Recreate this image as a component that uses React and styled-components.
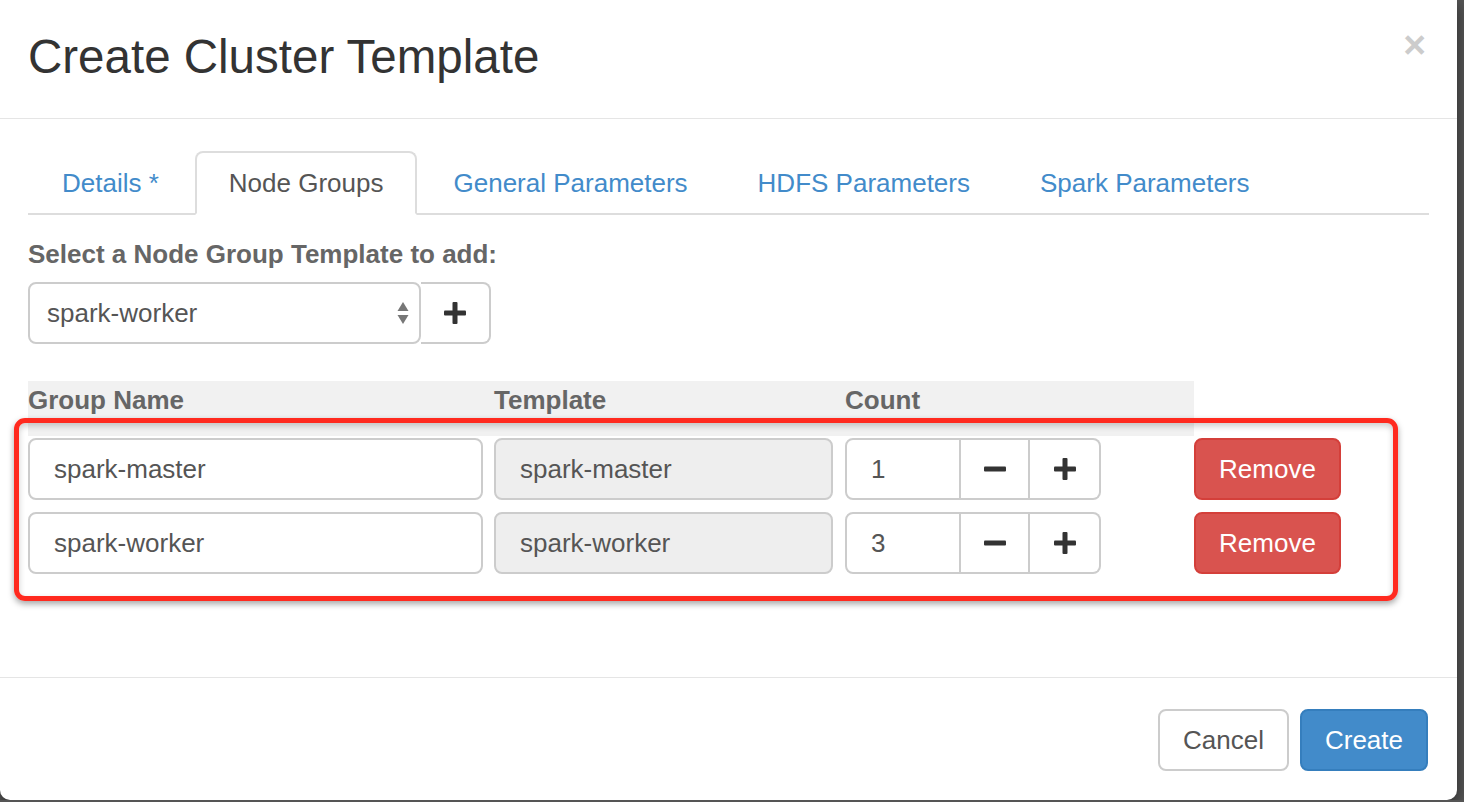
import styled, { createGlobalStyle } from 'styled-components'

const GlobalStyle = createGlobalStyle`
  html, body {
    margin: 0;
    padding: 0;
    background: #555555;
    font-family: 'Liberation Sans', Arial, Helvetica, sans-serif;
  }
  * {
    box-sizing: border-box;
  }
`

const blue = '#428bca'
const border = '#cccccc'

const Modal = styled.div`
  width: 1457px;
  height: 800px;
  background: #ffffff;
  border-radius: 0 0 10px 10px;
  box-shadow: 0 5px 15px rgba(0, 0, 0, 0.5);
  display: flex;
  flex-direction: column;
`

const Header = styled.header`
  height: 119px;
  flex-shrink: 0;
  display: flex;
  justify-content: space-between;
  align-items: flex-start;
  padding: 0 31px 0 28px;
  border-bottom: 1px solid #e5e5e5;
`

const Title = styled.h4`
  margin: 31px 0 0;
  font-size: 47.5px;
  line-height: 52px;
  font-weight: 400;
  color: #333333;
`

const Close = styled.button`
  margin-top: 25px;
  padding: 0;
  border: 0;
  background: transparent;
  font-family: inherit;
  font-size: 39px;
  line-height: 39px;
  font-weight: 700;
  color: #cccccc;
  cursor: pointer;
`

const Body = styled.div`
  flex: 1;
  padding: 32px 28px 0;
`

const Tabs = styled.ul`
  display: flex;
  margin: 0;
  padding: 0;
  list-style: none;
  border-bottom: 2px solid #dddddd;
`

const Tab = styled.li`
  margin: 0 2px -2px 0;
  padding: 12px 32px;
  font-size: 26px;
  line-height: 36px;
  border: 2px solid ${(p) => (p.$active ? '#dddddd' : 'transparent')};
  border-bottom-color: ${(p) => (p.$active ? '#ffffff' : 'transparent')};
  border-radius: 8px 8px 0 0;
  background: ${(p) => (p.$active ? '#ffffff' : 'transparent')};
  background-clip: padding-box;
  color: ${(p) => (p.$active ? '#555555' : blue)};
  cursor: pointer;
`

const Label = styled.div`
  margin: 21px 0 9px;
  font-size: 26px;
  line-height: 37px;
  font-weight: 700;
  color: #666666;
`

const AddRow = styled.div`
  display: flex;
  height: 62px;
`

const Select = styled.div`
  width: 393px;
  display: flex;
  align-items: center;
  justify-content: space-between;
  padding: 0 10px 0 17px;
  border: 2px solid ${border};
  border-radius: 8px;
  font-size: 26px;
  color: #555555;
`

const SquareButton = styled.button`
  width: ${(p) => p.$w}px;
  height: 100%;
  display: flex;
  align-items: center;
  justify-content: center;
  padding: 0;
  background: #ffffff;
  border: 2px solid ${border};
  border-left-width: ${(p) => (p.$joined ? 0 : 2)}px;
  border-radius: ${(p) => p.$radius || '0'};
  color: #333333;
  cursor: pointer;
`

const Table = styled.div`
  position: relative;
  margin-top: 37px;
`

const Grid = styled.div`
  display: grid;
  grid-template-columns: 466px 351px 349px 147px;
  height: ${(p) => p.$h}px;
`

const HeadCell = styled.div`
  background: ${(p) => (p.$blank ? 'transparent' : '#f1f1f1')};
  padding-top: 1px;
  font-size: 26px;
  line-height: 37px;
  font-weight: 700;
  color: #666666;
`

const Rows = styled.div`
  display: flex;
  flex-direction: column;
  gap: 12px;
  margin-top: 2px;
`

const Input = styled.div`
  width: ${(p) => p.$w}px;
  height: 62px;
  display: flex;
  align-items: center;
  padding-left: 24px;
  border: 2px solid ${border};
  border-radius: ${(p) => p.$radius || '8px'};
  background: ${(p) => (p.$disabled ? '#eeeeee' : '#ffffff')};
  font-size: 26px;
  color: #555555;
`

const Counter = styled.div`
  display: flex;
  height: 62px;
`

const Button = styled.button`
  height: 62px;
  padding: 0 ${(p) => p.$pad || 23}px;
  font-family: inherit;
  font-size: 26px;
  border-radius: 8px;
  border: 2px solid;
  cursor: pointer;
  ${(p) =>
    p.$kind === 'danger'
      ? 'background:#d9534f;border-color:#d43f3a;color:#fff;'
      : p.$kind === 'primary'
        ? 'background:#428bca;border-color:#357ebd;color:#fff;'
        : 'background:#fff;border-color:#ccc;color:#555;'}
`

const Highlight = styled.div`
  position: absolute;
  left: -14px;
  top: 37px;
  width: 1384px;
  height: 183px;
  border: 5px solid #ff2a1f;
  border-radius: 11px;
  box-shadow: 0 3px 6px rgba(0, 0, 0, 0.35), inset 0 3px 6px rgba(0, 0, 0, 0.2);
  pointer-events: none;
`

const Footer = styled.footer`
  height: 123px;
  flex-shrink: 0;
  display: flex;
  justify-content: flex-end;
  align-items: flex-start;
  gap: 11px;
  padding: 31px 29px 0;
  border-top: 1px solid #e5e5e5;
`

const Plus = () => (
  <svg width='22' height='22' viewBox='0 0 22 22'>
    <rect x='8.5' y='0' width='5' height='22' rx='1' fill='#333' />
    <rect x='0' y='8.5' width='22' height='5' rx='1' fill='#333' />
  </svg>
)

const Minus = () => (
  <svg width='22' height='22' viewBox='0 0 22 22'>
    <rect x='0' y='8.5' width='22' height='5' rx='1' fill='#333' />
  </svg>
)

const Arrows = () => (
  <svg width='12' height='24' viewBox='0 0 12 24'>
    <path d='M6 1 L11.5 10 L0.5 10 Z' fill='#777' />
    <path d='M6 23 L11.5 14 L0.5 14 Z' fill='#777' />
  </svg>
)

const groups = [
  { name: 'spark-master', count: 1 },
  { name: 'spark-worker', count: 3 },
]

export default function App() {
  return (
    <>
      <GlobalStyle />
      <Modal>
        <Header>
          <Title>Create Cluster Template</Title>
          <Close>×</Close>
        </Header>
        <Body>
          <Tabs>
            <Tab>Details *</Tab>
            <Tab $active>Node Groups</Tab>
            <Tab>General Parameters</Tab>
            <Tab>HDFS Parameters</Tab>
            <Tab>Spark Parameters</Tab>
          </Tabs>
          <Label>Select a Node Group Template to add:</Label>
          <AddRow>
            <Select>
              spark-worker
              <Arrows />
            </Select>
            <SquareButton $w={70} $joined $radius='0 8px 8px 0'>
              <Plus />
            </SquareButton>
          </AddRow>
          <Table>
            <Grid $h={55}>
              <HeadCell>Group Name</HeadCell>
              <HeadCell>Template</HeadCell>
              <HeadCell>Count</HeadCell>
              <HeadCell $blank />
            </Grid>
            <Rows>
              {groups.map((g) => (
                <Grid key={g.name} $h={62}>
                  <Input $w={455}>{g.name}</Input>
                  <Input $w={339} $disabled>
                    {g.name}
                  </Input>
                  <Counter>
                    <Input $w={116} $radius='8px 0 0 8px'>
                      {g.count}
                    </Input>
                    <SquareButton $w={69} $joined>
                      <Minus />
                    </SquareButton>
                    <SquareButton $w={71} $joined $radius='0 8px 8px 0'>
                      <Plus />
                    </SquareButton>
                  </Counter>
                  <Button $kind='danger' $pad={22}>
                    Remove
                  </Button>
                </Grid>
              ))}
            </Rows>
            <Highlight />
          </Table>
        </Body>
        <Footer>
          <Button>Cancel</Button>
          <Button $kind='primary'>Create</Button>
        </Footer>
      </Modal>
    </>
  )
}
